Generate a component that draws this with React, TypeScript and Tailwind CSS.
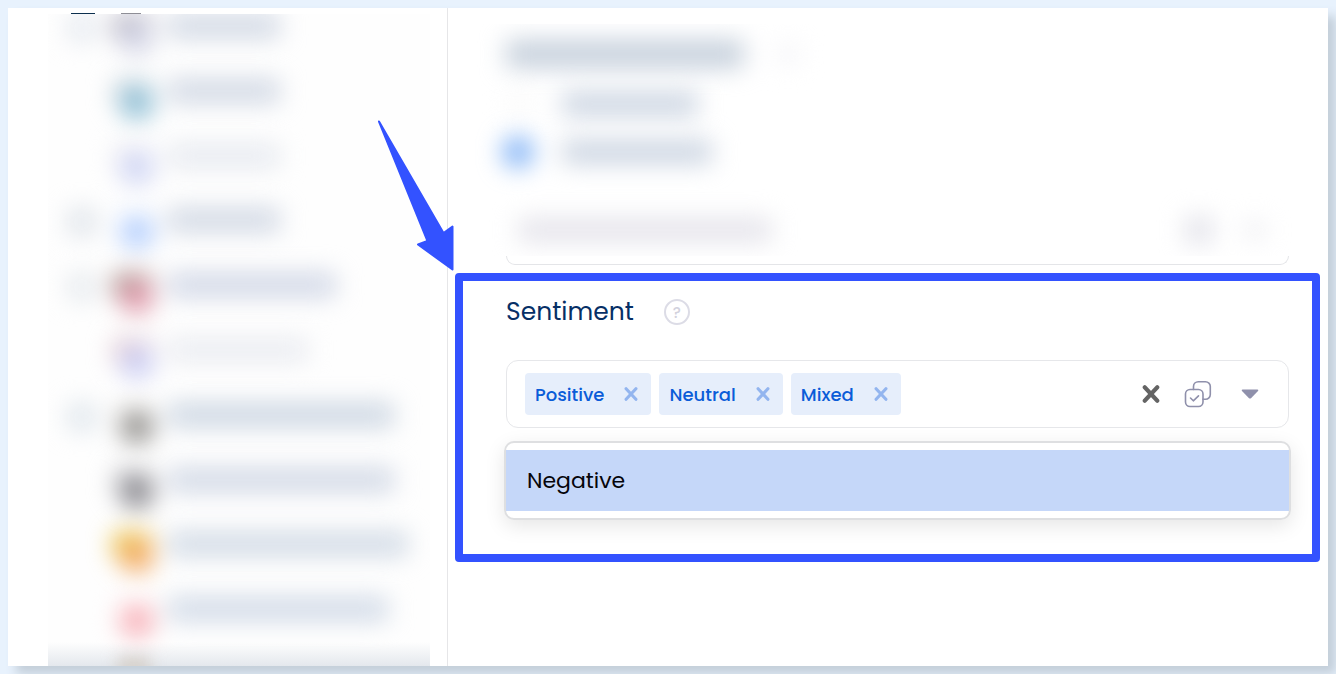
import React, { useState } from "react";

interface Account {
  id: number;
  avatar: string;
  badge: string;
  bar: string;
  box: string;
}

// Soft placeholder rows for the account list
const accounts: Account[] = [
  { id: 1, avatar: "#aeabba", badge: "#d3d5e6", bar: "w-28 bg-[#d1d8e4]", box: "bg-[#e6eaf0]" },
  { id: 2, avatar: "#d3dbe2", badge: "#8fbfd5", bar: "w-28 bg-[#d1d8e4]", box: "bg-transparent" },
  { id: 3, avatar: "#f0eff4", badge: "#cfd5f4", bar: "w-28 bg-[#e7eaf0]", box: "bg-transparent" },
  { id: 4, avatar: "#fbfcfe", badge: "#b3cefd", bar: "w-28 bg-[#d1d8e4]", box: "bg-[#dfe4ea]" },
  { id: 5, avatar: "#a48f89", badge: "#e09aab", bar: "w-[168px] bg-[#d1d7e6]", box: "bg-[#e6eaee]" },
  { id: 6, avatar: "#e6cbd0", badge: "#cacdf3", bar: "w-[140px] bg-[#eaecf1]", box: "bg-transparent" },
  { id: 7, avatar: "#f3f2f1", badge: "#94928f", bar: "w-[226px] bg-[#ccd6e2]", box: "bg-[#dfe6ec]" },
  { id: 8, avatar: "#d3d3d7", badge: "#89888e", bar: "w-[226px] bg-[#d1d8e5]", box: "bg-transparent" },
  { id: 9, avatar: "#e8c43c", badge: "#f3ab66", bar: "w-[240px] bg-[#d1dae5]", box: "bg-transparent" },
  { id: 10, avatar: "#fffafa", badge: "#f7b0b8", bar: "w-[220px] bg-[#d1dae7]", box: "bg-transparent" },
];

const sentiments = ["Positive", "Neutral", "Mixed", "Negative"];

const CrossIcon: React.FC<{ className: string }> = ({ className }) => (
  <svg viewBox="0 0 20 20" className={className} fill="none" stroke="currentColor" strokeWidth="4.5" strokeLinecap="round">
    <path d="M3 2.5L17 17.5M17 2.5L3 17.5" />
  </svg>
);

const SelectAllIcon: React.FC = () => (
  <svg viewBox="0 0 28 28" className="w-7 h-7" fill="none" stroke="currentColor" strokeWidth="1.6" strokeLinecap="round" strokeLinejoin="round">
    <rect x="1.5" y="9.5" width="17.5" height="17" rx="4.5" />
    <path d="M9.5 9.5V6.5A4.8 4.8 0 0 1 14.3 1.7H21.5A4.8 4.8 0 0 1 26.3 6.5V14.5A4.8 4.8 0 0 1 21.5 19.3H19" />
    <path d="M6.5 18L9.3 20.8L14.5 15.8" />
  </svg>
);

const AccountList: React.FC = () => (
  <aside className="w-1/3 shrink-0 border-r border-[#e6e6e8] flex flex-col pl-10 pr-[17px]">
    <div className="h-1.5 flex items-end pl-[23px] gap-[26px]">
      <span className="w-6 h-px bg-[#0c2f4e]" />
      <span className="w-5 h-px bg-[#8e8e96]" />
    </div>
    <div className="flex-1 flex flex-col overflow-hidden bg-[#fefefe]">
      {accounts.map((account) => (
        <div key={account.id} className="flex-1 basis-0 flex items-start pl-5 blur-[12px]">
          <span className={`w-7 h-7 rounded-md ${account.box}`} />
          <svg viewBox="0 0 56 56" className="w-14 h-14 ml-2 shrink-0">
            <circle cx="28" cy="13" r="20" fill={account.avatar} />
            <circle cx="33" cy="24" r="17" fill={account.badge} />
          </svg>
          <span className={`h-6 ml-2 rounded ${account.bar}`} />
        </div>
      ))}
      <div className="h-6 shrink-0 -mt-5 pt-4 pl-[70px] bg-linear-to-b from-transparent to-[#e4e8ed]">
        <span className="block w-8 h-4 bg-[#d3cbc3] blur-[8px]" />
      </div>
    </div>
  </aside>
);

const KeywordSection: React.FC = () => (
  <div className="ml-[58px] mr-[39px]">
    {/* Heading and options */}
    <div className="-mx-8 px-8 h-[232px] overflow-hidden">
      <div className="flex items-center pt-4 blur-[12px]">
        <span className="w-[238px] h-7 bg-[#c6d0dc] rounded" />
        <span className="w-6 h-6 ml-8 bg-[#f5f5f8] rounded-full" />
      </div>
      <div className="flex items-center mt-6 blur-[12px]">
        <span className="w-7 h-6 bg-[#fafafa] rounded-full" />
        <span className="w-[136px] h-6 ml-7 bg-[#ccd5e2] rounded" />
      </div>
      <div className="flex items-center mt-5 blur-[12px]">
        <span className="w-8 h-8 -ml-1 bg-[#82b3f6] rounded-full" />
        <span className="w-[150px] h-6 ml-7 bg-[#ccd5e2] rounded" />
      </div>
      <div className="flex items-center mt-12 pl-3 pr-6 blur-[12px]">
        <span className="w-[254px] h-6 bg-[#e5e4eb] rounded" />
        <span className="w-7 h-7 ml-auto bg-[#e3e3ea] rounded-md" />
        <span className="w-5 h-5 ml-8 bg-[#ebebef] rounded-full" />
      </div>
    </div>
    <div className="h-[9px] border-x border-b border-[#e4e5e8] rounded-b-xl" />
  </div>
);

const SentimentSelect: React.FC = () => {
  const [selected, setSelected] = useState<string[]>(["Positive", "Neutral", "Mixed"]);
  const [open, setOpen] = useState<boolean>(true);

  const remaining = sentiments.filter((item) => !selected.includes(item));

  return (
    <div className="relative ml-[7px] mr-2 mt-2">
      {/* Pointer arrow */}
      <svg viewBox="0 0 80 154" className="absolute right-full bottom-full w-20 h-[154px] z-10 pointer-events-none">
        <path
          d="M4 2.5L68.5 114L77.5 107.5V150.5L43 125.5L52.5 122Z"
          fill="#3352ff"
          stroke="#3352ff"
          strokeWidth="2"
          strokeLinejoin="round"
        />
      </svg>

      <section className="border-8 border-[#3352ff] rounded-[4px] pt-[13px] pb-[34px] pl-[43px] pr-[23px]">
        <div className="flex items-center h-9 mb-[30px]">
          <label htmlFor="sentiment" className="text-[25px] text-[#062f66]">
            Sentiment
          </label>
          <button
            type="button"
            aria-label="Help"
            className="w-[26px] h-[26px] ml-[30px] border-2 border-[#dcdce6] rounded-full text-[#d2d2dd] text-[15px] leading-none font-medium flex items-center justify-center"
          >
            ?
          </button>
        </div>

        <div className="flex items-center h-[68px] border border-[#e6e7ea] rounded-xl pl-[18px] pr-[29px]">
          <div className="flex gap-2">
            {selected.map((item) => (
              <span
                key={item}
                className="flex items-center h-[42px] pl-2.5 pr-[13px] gap-5 bg-[#e6eefb] rounded-[4px] text-[18px] font-medium text-[#0a5cd8]"
              >
                {item}
                <button
                  type="button"
                  aria-label={`Remove ${item}`}
                  onClick={() => setSelected(selected.filter((s) => s !== item))}
                  className="text-[#93b5ef]"
                >
                  <CrossIcon className="w-3.5 h-3.5" />
                </button>
              </span>
            ))}
          </div>
          <input id="sentiment" type="text" className="flex-1 min-w-0 h-10 px-2 outline-none text-[18px]" />
          <div className="flex items-center text-[#8f90ab]">
            <button type="button" aria-label="Clear all" onClick={() => setSelected([])} className="text-[#646464]">
              <CrossIcon className="w-[18px] h-5" />
            </button>
            <button type="button" aria-label="Select all" onClick={() => setSelected(sentiments)} className="ml-6">
              <SelectAllIcon />
            </button>
            <button type="button" aria-label="Toggle options" onClick={() => setOpen(!open)} className="ml-[29px]">
              <svg viewBox="0 0 18 10" className="w-[18px] h-2.5" fill="currentColor">
                <path d="M1.5 0.5H16.5Q18 0.7 17 2L10 9.2Q9 10 8 9.2L1 2Q0 0.7 1.5 0.5Z" />
              </svg>
            </button>
          </div>
        </div>

        {open && (
          <ul className="-mx-0.5 mt-[13px] py-[7px] border-2 border-[#dedfe1] rounded-[10px] shadow-[0_6px_20px_rgba(0,0,0,0.1)]">
            {remaining.map((item) => (
              <li key={item}>
                <button
                  type="button"
                  onClick={() => setSelected([...selected, item])}
                  className="block w-full h-[61px] px-[21px] bg-[#c5d7f9] text-left text-[22px] text-[#05050a]"
                >
                  {item}
                </button>
              </li>
            ))}
          </ul>
        )}
      </section>
    </div>
  );
};

const App: React.FC = () => {
  return (
    <div className="min-h-screen flex p-2 bg-[#e8f2fd] font-[Poppins,Inter,sans-serif] overflow-hidden">
      <div className="flex-1 min-w-0 flex bg-white shadow-[8px_8px_10px_#c3ced9]">
        <AccountList />
        <main className="flex-1 min-w-0 pt-4">
          <KeywordSection />
          <SentimentSelect />
        </main>
      </div>
    </div>
  );
};

export default App;
